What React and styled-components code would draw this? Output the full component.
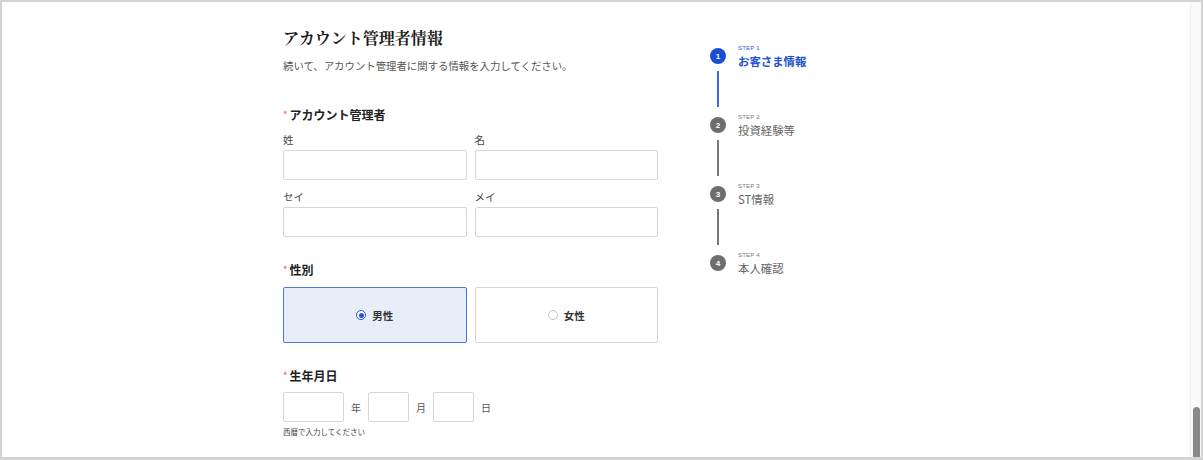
import React, { useState } from 'react'
import styled, { createGlobalStyle } from 'styled-components'

const GlobalStyle = createGlobalStyle`
  html, body {
    margin: 0;
    padding: 0;
    background: #ffffff;
  }
  body {
    font-family: "Noto Sans CJK JP", "Noto Sans", sans-serif;
    color: #222222;
  }
  * { box-sizing: border-box; }
`

const Frame = styled.div`
  width: 1203px;
  height: 460px;
  border: 2px solid #d3d3d3;
  border-bottom-width: 3px;
  display: flex;
  overflow: hidden;
  background: #ffffff;
`

const Page = styled.main`
  flex: 1;
  display: flex;
  padding: 26px 0 0 281px;
  gap: 52px;
`

const Form = styled.section`
  width: 375px;
  display: flex;
  flex-direction: column;
`

const Title = styled.h1`
  margin: 0;
  font-family: "Noto Serif CJK JP", "Noto Sans CJK JP", serif;
  font-size: 16px;
  line-height: 20px;
  font-weight: 700;
  color: #1e1e1e;
`

const Lead = styled.p`
  margin: 10px 0 0;
  font-size: 10.4px;
  line-height: 16px;
  color: #555555;
`

const SectionLabel = styled.h2`
  margin: ${props => props.gap}px 0 0;
  display: flex;
  align-items: center;
  gap: 2px;
  font-size: 12px;
  line-height: 16px;
  font-weight: 700;
  color: #222222;
`

const Required = styled.span`
  color: #ef7b7b;
  font-size: 9px;
  line-height: 9px;
  margin-top: -2px;
`

const NameGrid = styled.div`
  display: grid;
  grid-template-columns: 1fr 1fr;
  column-gap: 8px;
  margin-top: ${props => props.gap}px;
`

const Field = styled.label`
  display: flex;
  flex-direction: column;
  gap: 3px;
`

const FieldLabel = styled.span`
  font-size: 10.5px;
  line-height: 14px;
  color: #444444;
`

const TextBox = styled.input`
  width: ${props => props.w ? `${props.w}px` : '100%'};
  height: 30px;
  border: 1px solid #d6d6d6;
  border-radius: 2px;
  background: #ffffff;
  padding: 0 8px;
  font: inherit;
  outline: none;
`

const Choices = styled.div`
  display: grid;
  grid-template-columns: 1fr 1fr;
  column-gap: 8px;
  margin-top: 9px;
`

const Choice = styled.button`
  height: 56px;
  display: flex;
  align-items: center;
  justify-content: center;
  gap: 6px;
  border: 1px solid ${props => props.active ? '#4a78d8' : '#d6d6d6'};
  border-radius: 2px;
  background: ${props => props.active ? '#e8eef9' : '#ffffff'};
  font-family: "Noto Sans CJK JP", sans-serif;
  font-size: 10.5px;
  font-weight: 700;
  color: #333333;
  cursor: pointer;
  padding: 0;
`

const Dot = styled.span`
  width: 10px;
  height: 10px;
  border-radius: 50%;
  border: 1px solid ${props => props.active ? '#2356cf' : '#c4c4c4'};
  background: #ffffff;
  display: flex;
  align-items: center;
  justify-content: center;
  &::after {
    content: '';
    width: 5px;
    height: 5px;
    border-radius: 50%;
    background: ${props => props.active ? '#2356cf' : 'transparent'};
  }
`

const DateRow = styled.div`
  display: flex;
  align-items: center;
  margin-top: 8px;
`

const Unit = styled.span`
  font-size: 10px;
  color: #555555;
  width: 24px;
  text-align: center;
`

const Help = styled.p`
  margin: 4px 0 0;
  font-size: 7.5px;
  line-height: 12px;
  color: #444444;
`

const Stepper = styled.ol`
  list-style: none;
  margin: 20px 0 0;
  padding: 0;
  display: flex;
  flex-direction: column;
`

const Step = styled.li`
  display: flex;
  gap: 12px;
`

const Marker = styled.div`
  display: flex;
  flex-direction: column;
  align-items: center;
  width: 16px;
`

const Circle = styled.span`
  width: 16px;
  height: 16px;
  border-radius: 50%;
  background: ${props => props.active ? '#1a4fd4' : '#6e6e6e'};
  color: #ffffff;
  font-family: "Liberation Sans", Arial, sans-serif;
  font-size: 8px;
  font-weight: 700;
  display: flex;
  align-items: center;
  justify-content: center;
`

const Connector = styled.span`
  width: 2px;
  height: 36px;
  margin: 7px 0 10px;
  background: ${props => props.active ? '#3a6be0' : '#7a7a7a'};
`

const StepText = styled.div`
  display: flex;
  flex-direction: column;
  margin-top: -4px;
`

const StepNo = styled.span`
  font-family: "Liberation Sans", Arial, sans-serif;
  font-size: 6px;
  line-height: 8px;
  letter-spacing: 0.2px;
  color: ${props => props.active ? '#2a5bd7' : '#777777'};
`

const StepName = styled.span`
  font-size: 11.4px;
  line-height: 18px;
  font-weight: ${props => props.active ? 700 : 400};
  color: ${props => props.active ? '#1f52d4' : '#666666'};
`

const Track = styled.div`
  width: 11px;
  background: #fafafa;
  border-left: 1px solid #f0f0f0;
  display: flex;
  flex-direction: column;
  justify-content: flex-end;
  align-items: center;
`

const Thumb = styled.div`
  width: 7px;
  height: 50px;
  border-radius: 4px 4px 0 0;
  background: #8a8a8a;
`

const steps = [
  { no: 1, name: 'お客さま情報' },
  { no: 2, name: '投資経験等' },
  { no: 3, name: 'ST情報' },
  { no: 4, name: '本人確認' },
]

const App = () => {
  const [gender, setGender] = useState('male')

  return (
    <>
      <GlobalStyle />
      <Frame>
        <Page>
          <Form>
            <Title>アカウント管理者情報</Title>
            <Lead>続いて、アカウント管理者に関する情報を入力してください。</Lead>

            <SectionLabel gap={33}><Required>*</Required>アカウント管理者</SectionLabel>
            <NameGrid gap={10}>
              <Field><FieldLabel>姓</FieldLabel><TextBox /></Field>
              <Field><FieldLabel>名</FieldLabel><TextBox /></Field>
            </NameGrid>
            <NameGrid gap={10}>
              <Field><FieldLabel>セイ</FieldLabel><TextBox /></Field>
              <Field><FieldLabel>メイ</FieldLabel><TextBox /></Field>
            </NameGrid>

            <SectionLabel gap={25}><Required>*</Required>性別</SectionLabel>
            <Choices>
              <Choice active={gender === 'male'} onClick={() => setGender('male')}>
                <Dot active={gender === 'male'} />男性
              </Choice>
              <Choice active={gender === 'female'} onClick={() => setGender('female')}>
                <Dot active={gender === 'female'} />女性
              </Choice>
            </Choices>

            <SectionLabel gap={25}><Required>*</Required>生年月日</SectionLabel>
            <DateRow>
              <TextBox w={61} />
              <Unit>年</Unit>
              <TextBox w={41} />
              <Unit>月</Unit>
              <TextBox w={41} />
              <Unit>日</Unit>
            </DateRow>
            <Help>西暦で入力してください</Help>
          </Form>

          <Stepper>
            {steps.map((step, i) => {
              const active = step.no === 1
              return (
                <Step key={step.no}>
                  <Marker>
                    <Circle active={active}>{step.no}</Circle>
                    {i < steps.length - 1 && <Connector active={active} />}
                  </Marker>
                  <StepText>
                    <StepNo active={active}>STEP {step.no}</StepNo>
                    <StepName active={active}>{step.name}</StepName>
                  </StepText>
                </Step>
              )
            })}
          </Stepper>
        </Page>
        <Track><Thumb /></Track>
      </Frame>
    </>
  )
}

export default App
